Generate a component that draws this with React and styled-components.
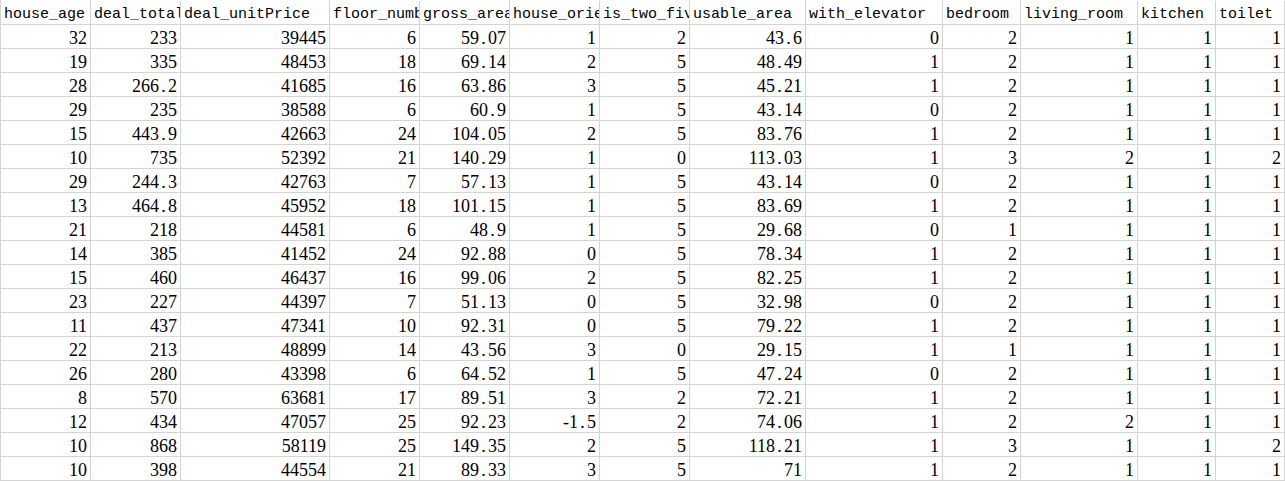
import React from "react";
import styled, { createGlobalStyle } from "styled-components";

const GlobalStyle = createGlobalStyle`
  html, body {
    margin: 0;
    padding: 0;
    background: #ffffff;
  }
  body {
    overflow: hidden;
  }
`;

const COLUMNS = [
  { name: "house_age", width: 90 },
  { name: "deal_total", width: 90 },
  { name: "deal_unitPrice", width: 149 },
  { name: "floor_number", width: 90 },
  { name: "gross_area", width: 90 },
  { name: "house_orientation", width: 90 },
  { name: "is_two_five", width: 90 },
  { name: "usable_area", width: 116 },
  { name: "with_elevator", width: 137 },
  { name: "bedroom", width: 78 },
  { name: "living_room", width: 117 },
  { name: "kitchen", width: 78 },
  { name: "toilet", width: 69 },
];

const ROWS = [
  ["32", "233", "39445", "6", "59.07", "1", "2", "43.6", "0", "2", "1", "1", "1"],
  ["19", "335", "48453", "18", "69.14", "2", "5", "48.49", "1", "2", "1", "1", "1"],
  ["28", "266.2", "41685", "16", "63.86", "3", "5", "45.21", "1", "2", "1", "1", "1"],
  ["29", "235", "38588", "6", "60.9", "1", "5", "43.14", "0", "2", "1", "1", "1"],
  ["15", "443.9", "42663", "24", "104.05", "2", "5", "83.76", "1", "2", "1", "1", "1"],
  ["10", "735", "52392", "21", "140.29", "1", "0", "113.03", "1", "3", "2", "1", "2"],
  ["29", "244.3", "42763", "7", "57.13", "1", "5", "43.14", "0", "2", "1", "1", "1"],
  ["13", "464.8", "45952", "18", "101.15", "1", "5", "83.69", "1", "2", "1", "1", "1"],
  ["21", "218", "44581", "6", "48.9", "1", "5", "29.68", "0", "1", "1", "1", "1"],
  ["14", "385", "41452", "24", "92.88", "0", "5", "78.34", "1", "2", "1", "1", "1"],
  ["15", "460", "46437", "16", "99.06", "2", "5", "82.25", "1", "2", "1", "1", "1"],
  ["23", "227", "44397", "7", "51.13", "0", "5", "32.98", "0", "2", "1", "1", "1"],
  ["11", "437", "47341", "10", "92.31", "0", "5", "79.22", "1", "2", "1", "1", "1"],
  ["22", "213", "48899", "14", "43.56", "3", "0", "29.15", "1", "1", "1", "1", "1"],
  ["26", "280", "43398", "6", "64.52", "1", "5", "47.24", "0", "2", "1", "1", "1"],
  ["8", "570", "63681", "17", "89.51", "3", "2", "72.21", "1", "2", "1", "1", "1"],
  ["12", "434", "47057", "25", "92.23", "-1.5", "2", "74.06", "1", "2", "2", "1", "1"],
  ["10", "868", "58119", "25", "149.35", "2", "5", "118.21", "1", "3", "1", "1", "2"],
  ["10", "398", "44554", "21", "89.33", "3", "5", "71", "1", "2", "1", "1", "1"],
];

const Sheet = styled.div`
  display: grid;
  grid-template-columns: ${(p) => p.$template};
  grid-auto-rows: 24px;
  width: 1285px;
  padding-top: 1px;
  box-sizing: border-box;
  border-left: 1px solid #d4d4d4;
  color: #000000;
`;

const Cell = styled.div`
  box-sizing: border-box;
  height: 24px;
  border-right: 1px solid #d4d4d4;
  border-bottom: 1px solid #d4d4d4;
  overflow: hidden;
  white-space: nowrap;
`;

const HeaderCell = styled(Cell)`
  font-family: "Liberation Mono", "DejaVu Sans Mono", monospace;
  font-size: 15px;
  line-height: 20px;
  padding: 4px 0 0 3px;
  text-align: left;
`;

const NumberCell = styled(Cell)`
  font-family: "Liberation Serif", "DejaVu Serif", serif;
  font-size: 18px;
  line-height: 20px;
  padding: 3px 3px 0 0;
  text-align: right;
`;

const Dot = styled.span`
  display: inline-block;
  width: 9px;
  text-align: center;
`;

function NumberText({ value }) {
  const parts = value.split(".");
  if (parts.length === 1) return <>{value}</>;
  return (
    <>
      {parts[0]}
      <Dot>.</Dot>
      {parts[1]}
    </>
  );
}

export default function App() {
  const template = COLUMNS.map((c) => `${c.width}px`).join(" ");
  return (
    <>
      <GlobalStyle />
      <Sheet $template={template}>
        {COLUMNS.map((c) => (
          <HeaderCell key={c.name}>{c.name}</HeaderCell>
        ))}
        {ROWS.map((row, r) =>
          row.map((v, i) => (
            <NumberCell key={`${r}-${i}`}>
              <NumberText value={v} />
            </NumberCell>
          ))
        )}
      </Sheet>
    </>
  );
}
